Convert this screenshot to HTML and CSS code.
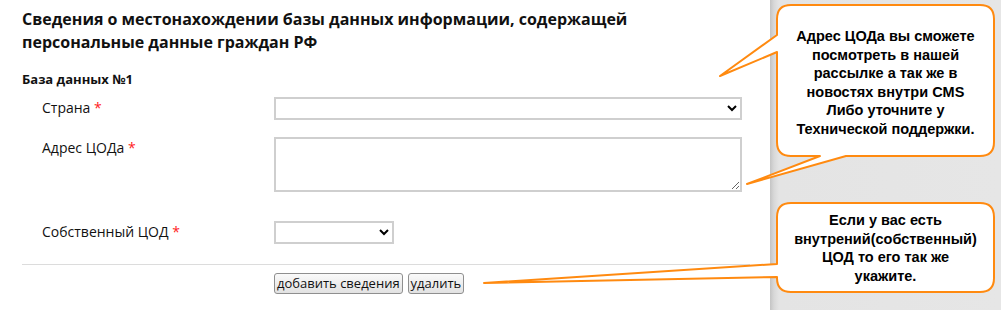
FILE: index.html
```html
<!DOCTYPE html>
<html>
<head>
    <meta charset="utf-8">
    <meta name="viewport" content="width=device-width, initial-scale=1.0">
    <link rel="stylesheet" href="styles.css">
</head>
<body>
    <div class="page">

        <div class="main">
            <h1 class="title">Сведения о местонахождении базы данных информации, содержащей персональные данные граждан РФ</h1>

            <div class="db-name">База данных №1</div>

            <div class="row row-country">
                <label class="label">Страна <span class="req">*</span></label>
                <select class="field select-wide"><option></option></select>
            </div>

            <div class="row row-address">
                <label class="label">Адрес ЦОДа <span class="req">*</span></label>
                <textarea class="field area"></textarea>
            </div>

            <div class="row row-own">
                <label class="label">Собственный ЦОД <span class="req">*</span></label>
                <select class="field select-small"><option></option></select>
            </div>

            <hr class="line">

            <div class="actions">
                <button class="btn">добавить сведения</button>
                <button class="btn">удалить</button>
            </div>
        </div>

        <div class="side"></div>

        <!-- callouts lie over the form and the side panel -->
        <svg class="callouts" width="1001" height="310" viewBox="0 0 1001 310">
            <path class="bubble" d="M 791 5 H 980 Q 994 5 994 19 V 142 Q 994 156 980 156 H 846 L 747 184 L 820 156 H 791 Q 777 156 777 142 V 52 L 720 76 L 777 35 V 19 Q 777 5 791 5 Z"/>
            <path class="bubble" d="M 791 203 H 980 Q 994 203 994 217 V 278 Q 994 292 980 292 H 791 Q 777 292 777 278 V 277 L 484 283 L 777 264 V 217 Q 777 203 791 203 Z"/>
        </svg>

        <div class="note note-top">
            Адрес ЦОДа вы сможете<br>
            посмотреть в нашей<br>
            рассылке а так же в<br>
            новостях внутри CMS<br>
            Либо уточните у<br>
            Технической поддержки.
        </div>

        <div class="note note-bottom">
            Если у вас есть<br>
            внутрений(собственный)<br>
            ЦОД то его так же<br>
            укажите.
        </div>

    </div>
</body>
</html>
```

FILE: styles.css
```css
body {
    margin: 0;
    font-family: "Open Sans", "Liberation Sans", sans-serif;
    color: #111;
}

.page {
    position: relative;
    display: flex;
    width: 1001px;
    height: 310px;
    overflow: hidden;
}

.main {
    width: 748px;
    padding: 0 0 0 22px;
    background: #fff;
}

.side {
    flex: 1;
    background: linear-gradient(to right, #c4c4c4 0px, #d8d8d8 4px, #e4e4e4 9px, #e6e6e6 100%);
}

.title {
    margin: 8px 0 0 0;
    font-size: 16px;
    line-height: 23px;
    font-weight: bold;
    width: 640px;
}

.db-name {
    margin-top: 16px;
    font-size: 13px;
    font-weight: bold;
    line-height: 18px;
}

.row {
    display: flex;
    align-items: flex-start;
    padding-left: 20px;
}

.label {
    width: 232px;
    font-size: 14px;
    line-height: 19px;
}

.req {
    color: #f22;
}

.row-country {
    margin-top: 9px;
}

.row-country .label {
    padding-top: 1px;
}

.row-address {
    margin-top: 17px;
}

.row-address .label {
    padding-top: 1px;
}

.row-own {
    margin-top: 29px;
}

.row-own .label {
    padding-top: 1px;
}

.field {
    box-sizing: border-box;
    border: 2px solid #cfcfcf;
    background: #fff;
    font-family: "Open Sans", "Liberation Sans", sans-serif;
    margin: 0;
}

.select-wide {
    width: 468px;
    height: 23px;
}

.select-small {
    width: 120px;
    height: 23px;
}

.area {
    width: 468px;
    height: 55px;
    resize: both;
}

.line {
    margin: 20px 0 0 0;
    width: 728px;
    border: 0;
    border-top: 1px solid #dcdcdc;
}

.actions {
    display: flex;
    gap: 5px;
    padding-left: 252px;
    margin-top: 8px;
}

.btn {
    font-family: "Open Sans", "Liberation Sans", sans-serif;
    font-size: 13px;
    line-height: 17px;
    height: 21px;
    padding: 0 2px;
    color: #111;
    border: 1px solid #8f8f8f;
    border-radius: 3px;
    background: linear-gradient(#fafafa, #e2e2e2);
}

.callouts {
    position: absolute;
    left: 0;
    top: 0;
}

.bubble {
    fill: #fff;
    stroke: #ff8a10;
    stroke-width: 2;
    stroke-linejoin: round;
}

.note {
    position: absolute;
    left: 777px;
    width: 217px;
    text-align: center;
    font-family: "Liberation Sans", Arial, sans-serif;
    font-size: 14.5px;
    font-weight: bold;
    color: #000;
}

.note-top {
    top: 27px;
    line-height: 18.5px;
}

.note-bottom {
    top: 211px;
    line-height: 18.5px;
}
```
